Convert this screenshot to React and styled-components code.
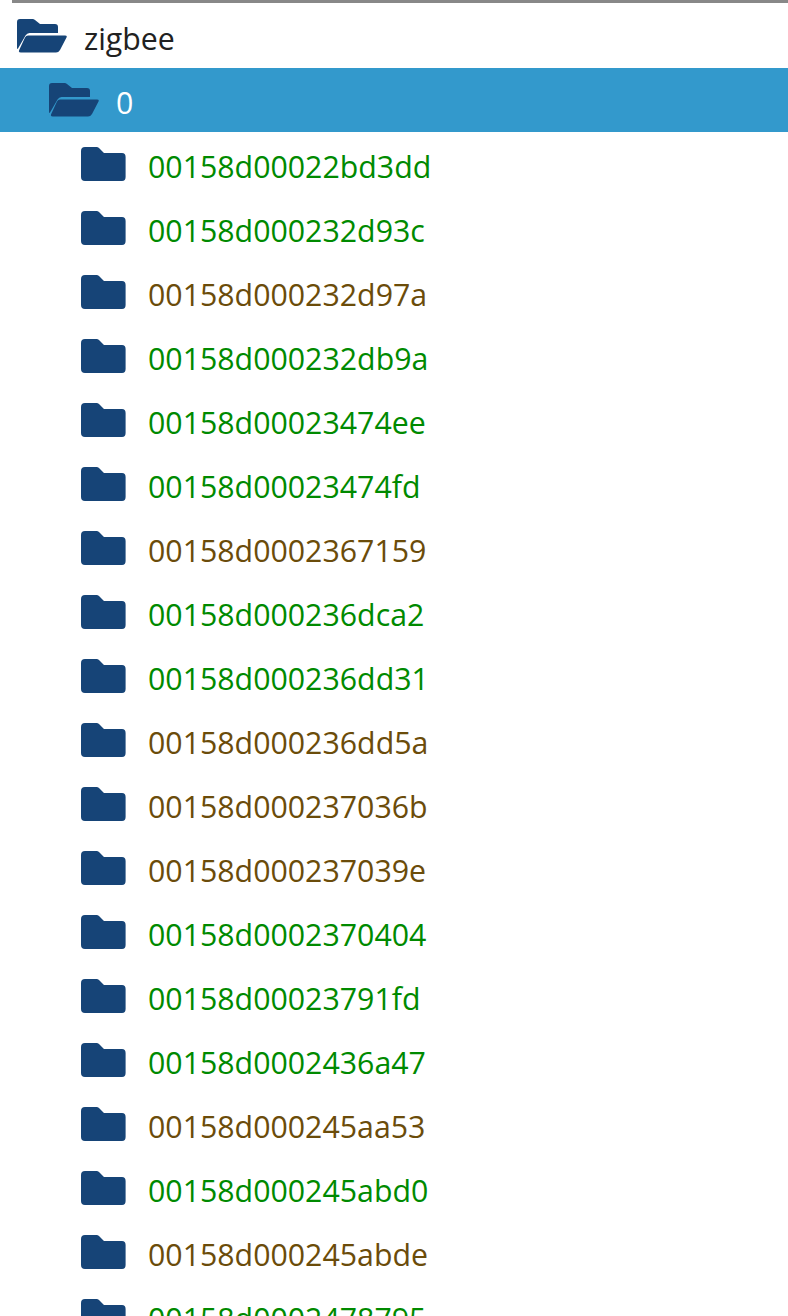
import React from "react";
import styled, { createGlobalStyle } from "styled-components";

const GlobalStyle = createGlobalStyle`
  html, body {
    margin: 0;
    padding: 0;
    height: 1316px;
    overflow: hidden;
    background: #ffffff;
  }
`;

const Tree = styled.div`
  display: flex;
  flex-direction: column;
  height: 1316px;
  overflow: hidden;
  font-family: "Open Sans", "Noto Sans", sans-serif;
  font-size: 30.3px;
  &::before {
    content: "";
    display: block;
    flex: none;
    height: 3px;
    margin: 0 0 1px 12px;
    background: #888888;
  }
`;

const Row = styled.div`
  flex: none;
  display: flex;
  align-items: center;
  height: 64px;
  padding-left: ${(p) => 17 + p.$level * 32}px;
  background: ${(p) => (p.$selected ? "#3399cc" : "transparent")};
`;

const IconSlot = styled.div`
  flex: none;
  width: 67px;
  height: 34px;
  display: flex;
  svg {
    display: block;
  }
`;

const Label = styled.span`
  line-height: 64px;
  padding-top: 6px;
  white-space: nowrap;
  color: ${(p) => p.$color};
`;

const FolderClosed = () => (
  <svg width="45" height="34" viewBox="0 0 45 34" fill="#164477">
    <path d="M4 0H15.5Q17 0 18 1L23 6H41Q44.6 6 44.6 10V30Q44.6 34 41 34H4Q0 34 0 30V4Q0 0 4 0Z" />
  </svg>
);

const FolderOpen = () => (
  <svg width="50" height="34" viewBox="0 0 50 34" fill="#164477">
    <path d="M3 0H15.5Q17 0 18 1L23 5H38Q41 5 41 8V14H12.5Q10 14 8.5 16.5L1 29.5Q0 30.5 0 29V3Q0 0 3 0Z" />
    <path d="M11 16.5H48Q50.5 16.5 49.5 18.5L43 31Q41.5 33.5 39 33.5H4Q1 33.5 2.2 31L8 18.5Q9 16.5 11 16.5Z" />
  </svg>
);

const GREEN = "#008a00";
const BROWN = "#6b4c0a";

const devices = [
  ["00158d00022bd3dd", GREEN],
  ["00158d000232d93c", GREEN],
  ["00158d000232d97a", BROWN],
  ["00158d000232db9a", GREEN],
  ["00158d00023474ee", GREEN],
  ["00158d00023474fd", GREEN],
  ["00158d0002367159", BROWN],
  ["00158d000236dca2", GREEN],
  ["00158d000236dd31", GREEN],
  ["00158d000236dd5a", BROWN],
  ["00158d000237036b", BROWN],
  ["00158d000237039e", BROWN],
  ["00158d0002370404", GREEN],
  ["00158d00023791fd", GREEN],
  ["00158d0002436a47", GREEN],
  ["00158d000245aa53", BROWN],
  ["00158d000245abd0", GREEN],
  ["00158d000245abde", BROWN],
  ["00158d0002478795", GREEN],
];

export default function App() {
  return (
    <>
      <GlobalStyle />
      <Tree>
        <Row $level={0}>
          <IconSlot>
            <FolderOpen />
          </IconSlot>
          <Label $color="#212121">zigbee</Label>
        </Row>
        <Row $level={1} $selected>
          <IconSlot>
            <FolderOpen />
          </IconSlot>
          <Label $color="#ffffff">0</Label>
        </Row>
        {devices.map(([name, color]) => (
          <Row key={name} $level={2}>
            <IconSlot>
              <FolderClosed />
            </IconSlot>
            <Label $color={color}>{name}</Label>
          </Row>
        ))}
      </Tree>
    </>
  );
}
